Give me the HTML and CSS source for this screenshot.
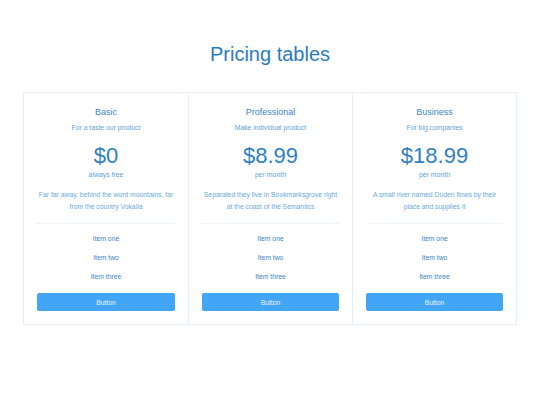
FILE: index.html
```html
<!DOCTYPE html>
<html lang="en">
<head>
  <meta charset="UTF-8">
  <title>Pricing tables</title>
  <link rel="stylesheet" href="styles.css">
</head>
<body>

<div class="page">
  <h1>Pricing tables</h1>

  <div class="pricing">
    <div class="plan">
      <h3>Basic</h3>
      <p class="tagline">For a taste our product</p>
      <div class="price">$0</div>
      <p class="period">always free</p>
      <p class="desc">Far far away, behind the word mountains, far from the country Vokalia</p>
      <ul class="items">
        <li>Item one</li>
        <li>Item two</li>
        <li>Item three</li>
      </ul>
      <button>Button</button>
    </div>

    <div class="plan">
      <h3>Professional</h3>
      <p class="tagline">Make individual product</p>
      <div class="price">$8.99</div>
      <p class="period">per month</p>
      <p class="desc">Separated they live in Bookmarksgrove right at the coast of the Semantics</p>
      <ul class="items">
        <li>Item one</li>
        <li>Item two</li>
        <li>Item three</li>
      </ul>
      <button>Button</button>
    </div>

    <div class="plan">
      <h3>Business</h3>
      <p class="tagline">For big companies</p>
      <div class="price">$18.99</div>
      <p class="period">per month</p>
      <p class="desc">A small river named Duden flows by their place and supplies it</p>
      <ul class="items">
        <li>Item one</li>
        <li>Item two</li>
        <li>Item three</li>
      </ul>
      <button>Button</button>
    </div>
  </div>
</div>

</body>
</html>
```

FILE: styles.css
```css
body {
  margin: 0;
  background: #fff;
  font-family: "Liberation Sans", Arial, sans-serif;
  color: #2f7fc6;
}

.page {
  padding-top: 40px;
}

h1 {
  margin: 0 0 24px;
  text-align: center;
  font-size: 20px;
  font-weight: normal;
  line-height: 28px;
  color: #2b7cc4;
}

.pricing {
  display: grid;
  grid-template-columns: repeat(3, 1fr);
  width: 494px;
  margin: 0 auto;
  border: 1px solid #e4eef7;
  box-sizing: border-box;
}

.plan {
  padding: 12px 13px 13px;
  text-align: center;
  border-left: 1px solid #e4eef7;
}

.plan:first-child {
  border-left: none;
}

.plan h3 {
  margin: 0;
  font-size: 9px;
  font-weight: normal;
  line-height: 14px;
  color: #3a86c8;
}

.tagline {
  margin: 3px 0 0;
  font-size: 6.8px;
  line-height: 12px;
  color: #5ea3dc;
}

.price {
  margin-top: 9px;
  font-size: 22px;
  line-height: 26px;
  color: #2f7fc6;
}

.period {
  margin: 0;
  font-size: 6.9px;
  line-height: 11px;
  color: #5ea3dc;
}

.desc {
  margin: 9px 0 0;
  padding-bottom: 10px;
  font-size: 6.8px;
  line-height: 12px;
  color: #6aaade;
  border-bottom: 1px solid #eef3f8;
}

.items {
  list-style: none;
  margin: 5px 0 0;
  padding: 0;
  font-size: 6.8px;
  line-height: 19px;
  color: #3a86c8;
}

button {
  display: block;
  width: 100%;
  height: 18px;
  margin-top: 7px;
  padding: 0;
  border: none;
  border-radius: 2px;
  background: #42a5f5;
  color: #e8f3fd;
  font-family: inherit;
  font-size: 6.8px;
}
```
